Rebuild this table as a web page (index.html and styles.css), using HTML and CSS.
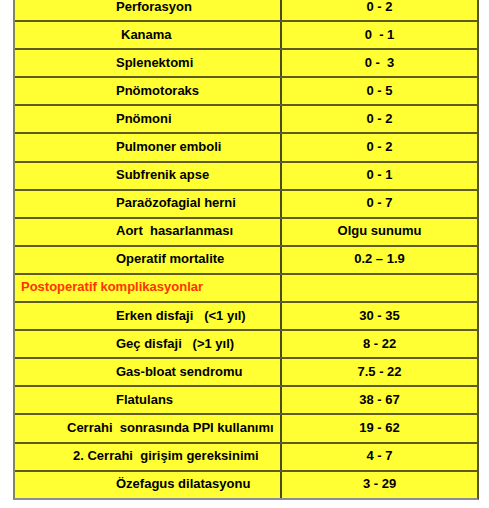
FILE: index.html
```html
<!DOCTYPE html>
<html lang="tr">
<head>
<meta charset="utf-8">
<link rel="stylesheet" href="styles.css">
</head>
<body>
<div class="table">
  <div class="row"><div class="name">Perforasyon</div><div class="val">0 - 2</div></div>
  <div class="row"><div class="name ind-k">Kanama</div><div class="val">0  - 1</div></div>
  <div class="row"><div class="name">Splenektomi</div><div class="val">0 -  3</div></div>
  <div class="row"><div class="name">Pnömotoraks</div><div class="val">0 - 5</div></div>
  <div class="row"><div class="name">Pnömoni</div><div class="val">0 - 2</div></div>
  <div class="row"><div class="name">Pulmoner emboli</div><div class="val">0 - 2</div></div>
  <div class="row"><div class="name">Subfrenik apse</div><div class="val">0 - 1</div></div>
  <div class="row"><div class="name">Paraözofagial herni</div><div class="val">0 - 7</div></div>
  <div class="row"><div class="name">Aort  hasarlanması</div><div class="val">Olgu sunumu</div></div>
  <div class="row"><div class="name">Operatif mortalite</div><div class="val">0.2 – 1.9</div></div>
  <div class="row"><div class="name section">Postoperatif komplikasyonlar</div><div class="val"></div></div>
  <div class="row"><div class="name">Erken disfaji   (&lt;1 yıl)</div><div class="val">30 - 35</div></div>
  <div class="row"><div class="name">Geç disfaji   (&gt;1 yıl)</div><div class="val">8 - 22</div></div>
  <div class="row"><div class="name">Gas-bloat sendromu</div><div class="val">7.5 - 22</div></div>
  <div class="row"><div class="name">Flatulans</div><div class="val">38 - 67</div></div>
  <div class="row"><div class="name ind-c1">Cerrahi  sonrasında PPI kullanımı</div><div class="val">19 - 62</div></div>
  <div class="row"><div class="name ind-c2">2. Cerrahi  girişim gereksinimi</div><div class="val">4 - 7</div></div>
  <div class="row"><div class="name">Özefagus dilatasyonu</div><div class="val">3 - 29</div></div>
</div>
</body>
</html>
```
FILE: styles.css
```css
html, body {
  margin: 0;
  padding: 0;
  background: #ffffff;
}
body {
  font-family: "Liberation Sans", Arial, sans-serif;
  font-weight: bold;
  font-size: 13px;
  color: #000000;
}
.table {
  margin: -8px 0 0 13px;
  width: 466px;
  box-sizing: border-box;
  background: #ffff33;
  border-left: 2px solid #85855a;
  border-right: 2px solid #55552a;
  border-bottom: 2px solid #8c8c98;
}
.row {
  display: grid;
  grid-template-columns: 265px 1fr;
  height: 28.1px;
  box-sizing: border-box;
  border-top: 2px solid #5c5c24;
}
.name, .val {
  display: flex;
  align-items: center;
  white-space: pre;
  padding-bottom: 2px;
}
.name {
  padding-left: 101px;
}
.val {
  justify-content: center;
  border-left: 2px solid #4a4a20;
}
.ind-k { padding-left: 106px; }
.ind-c1 { padding-left: 52px; }
.ind-c2 { padding-left: 58px; }
.section {
  padding-left: 6px;
  font-size: 13px;
  color: #ff3300;
}
```
